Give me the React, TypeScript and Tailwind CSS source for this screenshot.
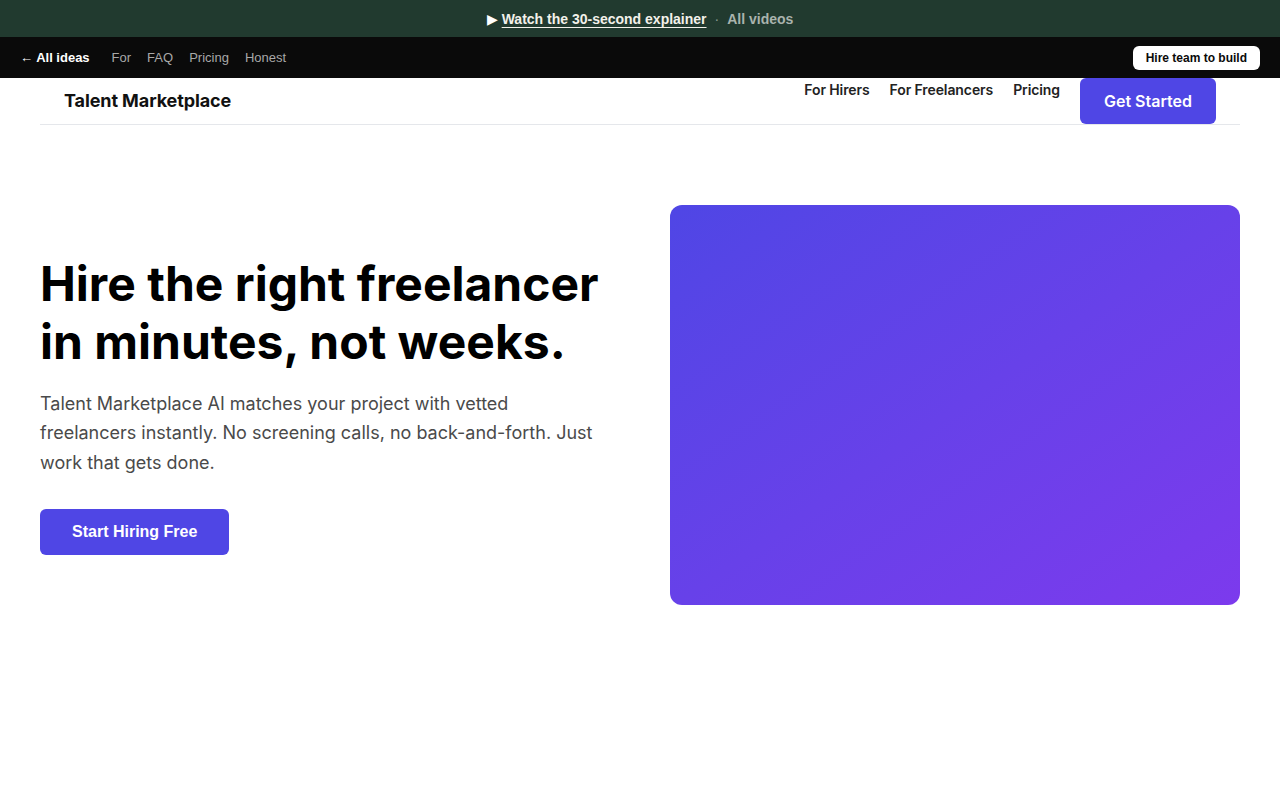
const navLinks = ['For Hirers', 'For Freelancers', 'Pricing']
const topLinks = ['For', 'FAQ', 'Pricing', 'Honest']

export default function App() {
    return (
        <div className="min-h-[800px] bg-white">
            {/* video banner */}
            <div
                className="flex h-[37px] items-center justify-center gap-2 bg-[#213a2f] [font-family:'Liberation_Sans',Arial,sans-serif] text-sm">
                <span className="text-white">▶</span>
                <a className="-ml-1 font-bold text-[#f3f1ea] underline underline-offset-[3px]">
                    Watch the 30-second explainer
                </a>
                <span className="text-[#8a9a90]">·</span>
                <a className="font-bold text-[#a9b3ad]">All videos</a>
            </div>

            {/* ideas bar */}
            <div
                className="flex h-[41px] items-center justify-between bg-[#0a0a0a] px-5 [font-family:'Liberation_Sans',Arial,sans-serif] text-[13px]">
                <div className="flex items-center gap-4">
                    <a className="mr-[6px] font-bold text-white">← All ideas</a>
                    {topLinks.map((l) => (
                        <a key={l} className="text-[#a8a8a8]">{l}</a>
                    ))}
                </div>
                <button
                    className="h-6 rounded-md bg-white px-[13px] text-xs font-bold text-[#0a0a0a]">
                    Hire team to build
                </button>
            </div>

            {/* site header */}
            <header
                className="mx-10 flex h-[47px] items-center justify-between border-b border-[#e5e7eb] px-6 [font-family:Inter,sans-serif]">
                <div className="text-lg font-bold tracking-[-0.1px] text-[#111]">Talent Marketplace</div>
                <nav className="flex h-full items-start gap-5">
                    {navLinks.map((l) => (
                        <a key={l} className="mt-[2px] text-sm font-semibold leading-5 tracking-[-0.1px] text-[#222]">{l}</a>
                    ))}
                    <button
                        className="h-[46px] rounded-md bg-[#4f46e5] px-6 text-base font-semibold text-white">
                        Get Started
                    </button>
                </nav>
            </header>

            {/* hero */}
            <section className="mx-10 grid grid-cols-2 items-center gap-[60px] pt-20">
                <div>
                    <h1 className="[font-family:Inter,sans-serif] text-5xl font-bold leading-[1.2] text-black">
                        Hire the right freelancer in minutes, not weeks.
                    </h1>
                    <p className="mt-[19px] max-w-[560px] [font-family:Inter,sans-serif] text-lg leading-[1.625] text-[#4a4a4a]">
                        Talent Marketplace AI matches your project with vetted freelancers instantly. No screening
                        calls, no back-and-forth. Just work that gets done.
                    </p>
                    <button
                        className="mt-8 h-[46px] rounded-md bg-[#4f46e5] px-8 [font-family:'Liberation_Sans',Arial,sans-serif] text-base font-bold text-white">
                        Start Hiring Free
                    </button>
                </div>
                <div className="h-[400px] rounded-xl bg-linear-to-br from-[#4f46e5] to-[#7c3aed]"/>
            </section>
        </div>
    )
}
